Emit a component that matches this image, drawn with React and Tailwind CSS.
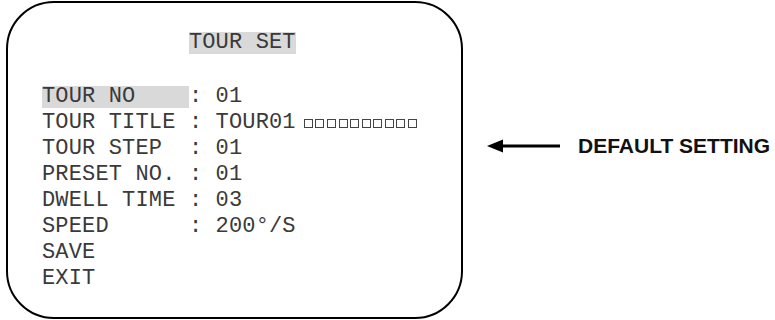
import React from "react";

const MONO = { fontFamily: '"Liberation Mono", "Courier New", monospace' };

const rows = [
  ["TOUR NO    ", "01", true],
  ["TOUR TITLE ", "TOUR01", false, true],
  ["TOUR STEP  ", "01"],
  ["PRESET NO. ", "01"],
  ["DWELL TIME ", "03"],
  ["SPEED      ", "200°/S"],
];

function Row({ label, value, hl, boxes }) {
  return (
    <div className="h-[26px] leading-[26px] whitespace-pre">
      <span className={hl ? "inline-block leading-[22px] bg-[#d9d9d9]" : ""}>{label}</span>
      {": "}
      {value}
      {boxes && (
        <span className="ml-[8px]">
          {Array.from({ length: 10 }, (_, i) => (
            <span key={i} className="inline-block w-[9px] h-[9px] mr-[2.6px] border border-[#444]" />
          ))}
        </span>
      )}
    </div>
  );
}

export default function App() {
  return (
    <div className="w-[775px] h-[320px] bg-white flex items-start overflow-hidden">
      {/* OSD screen */}
      <div
        className="ml-[6px] mt-[1px] w-[457px] h-[318px] shrink-0 rounded-[48px] border-2 border-black pl-[34px] pt-[27px] text-[22px] tracking-[0.15px] text-[#3a3a3a]"
        style={MONO}
      >
        <div className="h-[26px] leading-[26px] whitespace-pre">
          {"           "}
          <span className="inline-block leading-[22px] bg-[#d9d9d9]">TOUR SET</span>
        </div>
        <div className="mt-[28px]">
          {rows.map(([l, v, hl, b]) => (
            <Row key={l} label={l} value={v} hl={hl} boxes={b} />
          ))}
          <div className="h-[26px] leading-[26px]">SAVE</div>
          <div className="h-[26px] leading-[26px]">EXIT</div>
        </div>
      </div>

      {/* annotation */}
      <div className="ml-[24px] mt-[134px] flex items-center">
        <svg width="73" height="14" viewBox="0 0 73 14">
          <polygon points="0,7 16,0.5 16,13.5" fill="#000" />
          <rect x="12" y="5.5" width="61" height="3" fill="#000" />
        </svg>
        <span
          className="ml-[18px] text-[21px] leading-[24px] font-bold text-[#111]"
          style={{ fontFamily: '"Liberation Sans", Arial, sans-serif' }}
        >
          DEFAULT SETTING
        </span>
      </div>
    </div>
  );
}
